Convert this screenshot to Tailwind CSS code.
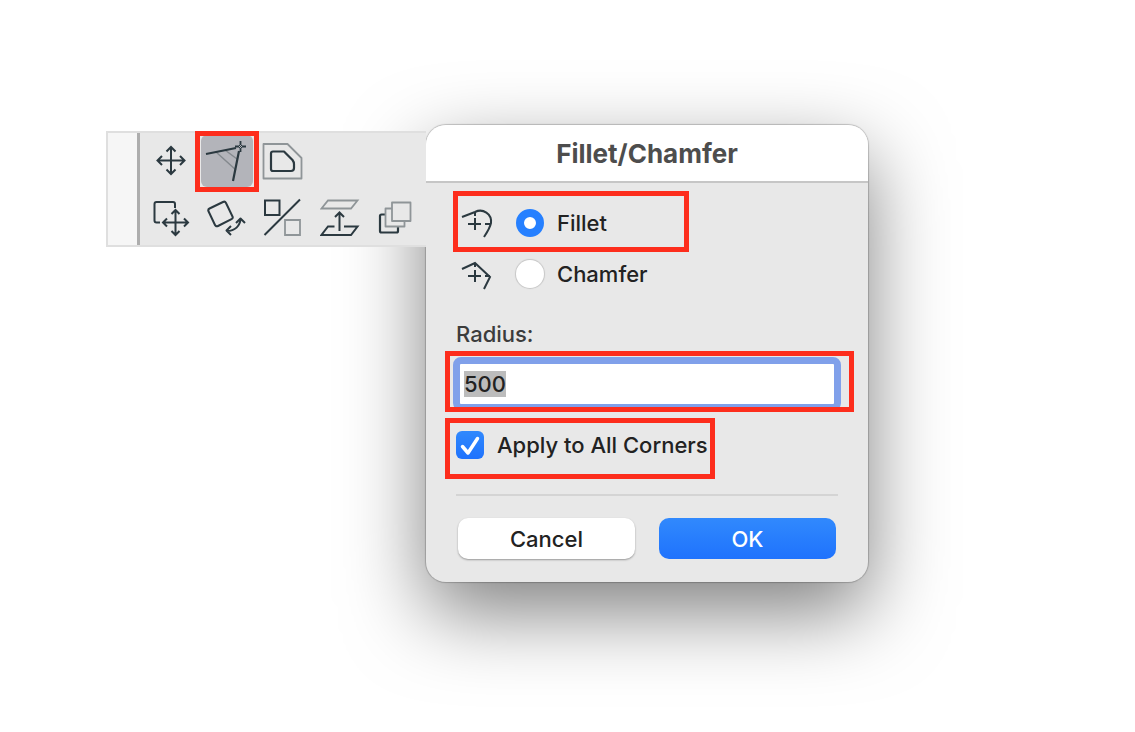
<!DOCTYPE html>
<html lang="en">
  <head>
    <meta charset="utf-8" />
    <meta name="viewport" content="initial-scale=1, width=device-width" />
    <title>Fillet/Chamfer</title>
    <script src="https://cdn.jsdelivr.net/npm/@tailwindcss/browser@4"></script>
  </head>
  <body class="bg-white font-['Inter','Liberation_Sans',sans-serif]">
    <main class="flex min-h-screen w-full items-start pt-[125px] pl-[106px]">

      <!-- Pet palette -->
      <div class="relative z-10 mt-1.5 flex w-full max-w-[320px] border-y-2 border-l-2 border-[#dfdfdf] bg-[#e8e8e8]">
        <div class="w-8 flex-none border-r-3 border-[#adadad] bg-[#f6f6f6]"></div>
        <div class="grid flex-1 auto-rows-[56px] grid-cols-5 place-items-center pr-0.5 pl-[3px] text-[#2b3940]">
          <button type="button" aria-label="Move">
            <svg class="size-10" viewBox="0 0 40 40" fill="none" stroke="currentColor" stroke-width="2">
              <path d="M20 6v27M6.500 19.500h27M15.500 10.500L20 6l4.500 4.500M15.500 28.500L20 33l4.500-4.500M11 15l-4.500 4.500L11 24M29 15l4.500 4.500L29 24" />
            </svg>
          </button>
          <button type="button" aria-label="Fillet/Chamfer" aria-pressed="true" class="relative flex size-[52px] items-center justify-center rounded-md bg-[#b3b4ba]">
            <svg class="size-10 overflow-visible" viewBox="0 0 40 40" fill="none" stroke="currentColor" stroke-width="1.8">
              <path d="M9 11l20 18M18 9l12 9" stroke="#84898e" stroke-width="1.5" />
              <path d="M-1 13l30-6M32 10l-6 30" stroke-width="2.2" />
              <path d="M33.500 0v4M33.500 7v4M28 5.500h4M35 5.500h4" />
              <path d="M32 4l3 3M35 4l-3 3" stroke-width="1" />
            </svg>
            <span class="pointer-events-none absolute -inset-x-1.5 -top-1 -bottom-[5px] border-5 border-[#fd2d1c]"></span>
          </button>
          <button type="button" aria-label="Offset">
            <svg class="size-10 overflow-visible" viewBox="0 0 40 40" fill="none" stroke="currentColor" stroke-linejoin="round">
              <path d="M0.500 3h24L38.500 17v20.500h-38z" stroke="#8f9598" stroke-width="1.800" />
              <path d="M10 10.500h11l8.500 8.500q1.500 2 1.500 4v4q0 3-3 3H10q-2 0-2-2V12.500q0-2 2-2z" stroke-width="2.2" />
            </svg>
          </button>
          <span></span>
          <span></span>
          <button type="button" aria-label="Move sub-polygon">
            <svg class="size-10" viewBox="0 0 40 40" fill="none" stroke="currentColor" stroke-width="2">
              <path d="M9 25.500H5.500q-2 0-2-2V7q0-2 2-2H22q2 0 2 2v4" />
              <path d="M24.500 13v25M12 25.500h25M20.500 17l4-4 4 4M20.500 34l4 4 4-4M16 21.500l-4 4 4 4M33 21.500l4 4-4 4" />
            </svg>
          </button>
          <button type="button" aria-label="Rotate">
            <svg class="size-10" viewBox="0 0 40 40" fill="none" stroke="currentColor" stroke-width="2" stroke-linejoin="round">
              <path d="M2.500 11.500L16 5q2-1 3 1l6.500 13.500q.8 1.800-1 2.700L11 29q-2 1-3-1L1.500 14.300Q.700 12.400 2.500 11.500z" />
              <path d="M20 34c8 0 13-5 13.500-12M24 29l-4.500 4.500L24 38M29 26l4.500-4.500L38 26" />
            </svg>
          </button>
          <button type="button" aria-label="Mirror">
            <svg class="size-10" viewBox="0 0 40 40" fill="none" stroke="currentColor" stroke-width="2">
              <path d="M22 23h15v15H22z" stroke="#8f9598" stroke-width="1.800" />
              <path d="M2 3.500h14.500V18H2z" />
              <path d="M1.500 38L37 2.500" />
            </svg>
          </button>
          <button type="button" aria-label="Elevate">
            <svg class="size-10" viewBox="0 0 40 40" fill="none" stroke="currentColor" stroke-width="2">
              <path d="M1.500 11.500L8 3.500h29.500l-6.500 8z" stroke="#8f9598" stroke-width="1.800" />
              <path d="M14.500 29.500H8L1.500 38H31l6.500-8.500H24" />
              <path d="M19.500 34V15.500M15 20l4.500-4.500L24 20" />
            </svg>
          </button>
          <button type="button" aria-label="Multiply">
            <svg class="size-10" viewBox="0 0 40 40" fill="none" stroke="currentColor" stroke-width="1.800" stroke-linejoin="round">
              <path d="M9 17.500H5.500Q4 17.500 4 19v15q0 1.500 1.500 1.500h15q1.500 0 1.500-1.500v-4" stroke-width="2.2" />
              <path d="M16 11.500H9.500v18h19V24M16 5.500h18.500V24H16z" stroke="#8f9598" />
            </svg>
          </button>
        </div>
      </div>

      <!-- Dialog -->
      <form class="w-full max-w-[442px] rounded-[20px] bg-[#e8e8e8] shadow-[0_0_1px_1px_rgba(0,0,0,0.2),0_30px_80px_0_rgba(0,0,0,0.5)]">
        <h1 class="flex h-[58px] items-center justify-center rounded-t-[20px] border-b-2 border-[#c6c6c6] bg-white text-[26px] font-bold text-[#4d4d4d]">Fillet/Chamfer</h1>

        <div class="px-[30px] pt-6 pb-[23px] text-[22px] leading-7 font-[450] text-[#222]">
          <div class="relative flex h-8 items-center pl-[5px]">
            <svg class="mr-[23px] size-8" viewBox="0 0 32 32" fill="none" stroke="#2b3940" stroke-width="2">
              <path d="M1 10L14 5c8-4 17 2 16 11q-1 5-7 14" />
              <path d="M14 5v4M14 11v12M7 17h13M24 17h5" />
            </svg>
            <input id="fillet" type="radio" name="corner" checked class="size-7 appearance-none rounded-full bg-white shadow-[0_0_1px_1px_rgba(0,0,0,0.15)] checked:border-8 checked:border-[#2680ff] checked:shadow-none" />
            <label for="fillet" class="pl-[13px]">Fillet</label>
            <span class="pointer-events-none absolute -top-4 -left-[3px] h-[61px] w-[236px] border-5 border-[#fd2d1c]"></span>
          </div>
          <div class="mt-[19px] flex h-8 items-center pl-[5px]">
            <svg class="mr-[23px] size-8" viewBox="0 0 32 32" fill="none" stroke="#2b3940" stroke-width="2">
              <path d="M1 11L14 5l15 14-6 12" />
              <path d="M14 5v4M14 12v12M7 18h13M24 18h5" />
            </svg>
            <input id="chamfer" type="radio" name="corner" class="size-7 appearance-none rounded-full bg-white shadow-[0_0_1px_1px_rgba(0,0,0,0.15)] checked:border-8 checked:border-[#2680ff] checked:shadow-none" />
            <label for="chamfer" class="pl-[13px]">Chamfer</label>
          </div>

          <label for="radius" class="mt-[30px] block text-[#3c3c3c]">Radius:</label>
          <div class="relative -mx-[3px] mt-[9px]">
            <input id="radius" type="text" value="500" class="block h-[54px] w-full rounded-lg border-7 border-[#80a0ea] bg-white pl-1 outline-none selection:bg-[#bcbcbc] selection:text-[#222]" />
            <span class="pointer-events-none absolute -top-1.5 -left-2 h-[61px] w-[409px] border-5 border-[#fd2d1c]"></span>
          </div>

          <div class="relative mt-[18px] flex h-8 items-center">
            <span class="grid">
              <input id="allCorners" type="checkbox" checked class="col-start-1 row-start-1 size-7 appearance-none rounded-md bg-white checked:bg-linear-to-b checked:from-[#3189fd] checked:to-[#1f72fd]" />
              <svg class="pointer-events-none col-start-1 row-start-1 size-7" viewBox="0 0 28 28" fill="none" stroke="#fff" stroke-width="3.5" stroke-linecap="round" stroke-linejoin="round">
                <path d="M6.500 15.500l5.500 6.500L21.500 7.500" />
              </svg>
            </span>
            <label for="allCorners" class="pl-[13px]">Apply to All Corners</label>
            <span class="pointer-events-none absolute -top-[11px] -left-[11px] h-[61px] w-[270px] border-5 border-[#fd2d1c]"></span>
          </div>

          <hr class="mt-[33px] border-t-2 border-[#d4d4d4]" />
          <div class="mt-[22px] flex gap-6 px-0.5">
            <button type="button" class="h-[41px] flex-1 rounded-[10px] bg-white shadow-[0_1px_2px_rgba(0,0,0,0.35)]">Cancel</button>
            <button type="submit" class="h-[41px] flex-1 rounded-[10px] bg-linear-to-b from-[#3189fd] to-[#1f72fd] text-white">OK</button>
          </div>
        </div>
      </form>
    </main>
    <script>
      // value is preselected when the dialog opens
      const radius = document.getElementById('radius');
      radius.focus();
      radius.select();
    </script>
  </body>
</html>
